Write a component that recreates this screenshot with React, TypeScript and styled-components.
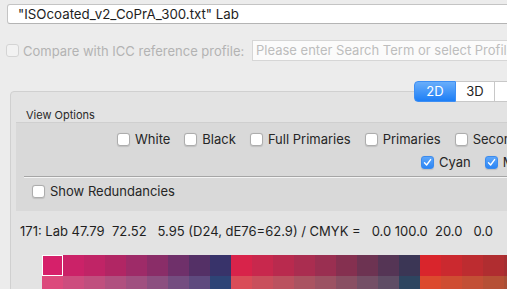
import React from "react";
import styled, { createGlobalStyle } from "styled-components";

const GlobalStyle = createGlobalStyle`
  html, body {
    margin: 0;
    padding: 0;
    background: #ececec;
    overflow: hidden;
  }
  body {
    font-family: Inter, "Liberation Sans", Arial, sans-serif;
    font-size: 13px;
    color: #262626;
  }
`;

// swatch colours, one array per group, two rows each
const groups: string[][][] = [
  [
    ["#d6206a", "#cb2268", "#c02466", "#b12664", "#9e2b68", "#8a2d68", "#6f306a", "#543066", "#38336a"],
    ["#dc4a7c", "#cd4d7e", "#c04f7e", "#b0507f", "#a05080", "#8c4f80", "#744d80", "#5e4a7e", "#2e4476"],
  ],
  [
    ["#d8234a", "#c8284d", "#b92a4e", "#aa2d50", "#9a2f51", "#853050", "#6d3352", "#553555", "#3b3655"],
    ["#d94d58", "#c94f5c", "#bb515f", "#aa5361", "#9c5263", "#894f63", "#744f66", "#5f4d65", "#2e4560"],
  ],
  [
    ["#d9252c", "#cb292f", "#bd2c30", "#b02d30", "#a42e31", "#972f33", "#823036", "#6b303a", "#55323f"],
    ["#dc4a2e", "#cf4d32", "#c34f35", "#b65035", "#a94f36", "#9b4e3a", "#874c40", "#714a47", "#5a484e"],
  ],
];

const Window = styled.div`
  width: 507px;
  height: 289px;
  overflow: hidden;
`;

const PathField = styled.div`
  box-sizing: border-box;
  width: 620px;
  height: 20px;
  margin: 4px 0 0 7px;
  padding-left: 10px;
  line-height: 18px;
  font-size: 13.3px;
  background: #fff;
  border: 1px solid #c4c4c4;
  border-bottom-color: #b4b4b4;
  border-radius: 3px;
  color: #1e1e1e;
  white-space: nowrap;
`;

const CompareRow = styled.div`
  display: flex;
  align-items: center;
  margin-top: 16px;
  padding-left: 6px;
  height: 21px;
`;

const CompareLabel = styled.span`
  flex: 0 0 229px;
  margin-left: 4px;
  color: #b3b3b3;
  white-space: nowrap;
`;

const SearchField = styled.div`
  box-sizing: border-box;
  flex: 0 0 400px;
  height: 21px;
  padding-left: 3px;
  line-height: 19px;
  background: #fbfbfb;
  border: 1px solid #d6d6d6;
  color: #bdbdbd;
  white-space: nowrap;
`;

const Tabs = styled.div`
  position: relative;
  z-index: 1;
  display: flex;
  margin: 20px 0 -11px 414px;
  height: 21px;
  width: 200px;
`;

const Segment = styled.div<{ $active?: boolean; $w: number }>`
  box-sizing: border-box;
  width: ${(p) => p.$w}px;
  height: 21px;
  line-height: 19px;
  text-align: center;
  font-size: 13px;
  color: ${(p) => (p.$active ? "#fff" : "#222")};
  background: ${(p) => (p.$active ? "linear-gradient(#69aefa, #1d7ef6)" : "#fff")};
  border: 1px solid ${(p) => (p.$active ? "#3d8ef3" : "#c8c8c8")};
  border-left-width: ${(p) => (p.$active ? 1 : 0)}px;
  &:first-child {
    border-radius: 4px 0 0 4px;
  }
`;

const TabBox = styled.div`
  box-sizing: border-box;
  width: 700px;
  margin-left: 10px;
  padding: 16px 0 0 5px;
  height: 260px;
  background: #e3e3e3;
  border: 1px solid #d0d0d0;
  border-radius: 4px;
`;

const GroupTitle = styled.div`
  margin-left: 10px;
  height: 14px;
  line-height: 15px;
  font-size: 11px;
  color: #2a2a2a;
`;

const OptionsBox = styled.div`
  padding: 7px 0 10px 0;
  background: #d9d9d9;
  box-shadow: inset 0 1px 0 #cfcfcf;
`;

const OptionRow = styled.div<{ $indent: number; $gap?: number }>`
  display: flex;
  align-items: center;
  gap: 14px;
  height: 20px;
  padding-left: ${(p) => p.$indent}px;
  margin-top: ${(p) => p.$gap ?? 0}px;
`;

const Option = styled.label`
  display: flex;
  align-items: center;
  gap: 5px;
  white-space: nowrap;
`;

const Box = styled.span<{ $checked?: boolean; $disabled?: boolean }>`
  box-sizing: border-box;
  display: inline-flex;
  align-items: center;
  justify-content: center;
  flex: 0 0 13px;
  width: 13px;
  height: 13px;
  border-radius: 3px;
  background: ${(p) => (p.$checked ? "linear-gradient(#5da6fa, #2c86f5)" : p.$disabled ? "#f2f2f2" : "#fff")};
  border: 1px solid ${(p) => (p.$checked ? "#3b8bee" : p.$disabled ? "#d4d4d4" : "#adadad")};
  box-shadow: ${(p) => (p.$disabled ? "none" : "0 0.5px 1px rgba(0,0,0,0.12)")};
`;

const Separator = styled.div`
  margin: 4px 0 2px 8px;
  height: 1px;
  background: #a6a6a6;
  box-shadow: 0 1px 0 #f4f4f4;
`;

const Readout = styled.div`
  margin: 12px 0 0 4px;
  line-height: 16px;
  white-space: pre;
  color: #1f1f1f;
`;

const Swatches = styled.div`
  display: flex;
  margin: 16px 0 0 26px;
`;

const SwatchGroup = styled.div`
  display: grid;
  grid-template-columns: repeat(9, 21px);
  grid-auto-rows: 21px;
`;

const Swatch = styled.div<{ $selected?: boolean }>`
  box-shadow: ${(p) => (p.$selected ? "inset 0 0 0 1px #fff" : "none")};
`;

const Checkbox: React.FC<{ checked?: boolean; disabled?: boolean }> = ({ checked, disabled }) => (
  <Box $checked={checked} $disabled={disabled}>
    {checked && (
      <svg width="9" height="9" viewBox="0 0 9 9">
        <path d="M1.5 4.8 L3.6 7 L7.6 1.6" fill="none" stroke="#fff" strokeWidth="1.4" strokeLinecap="round" strokeLinejoin="round" />
      </svg>
    )}
  </Box>
);

const Opt: React.FC<{ label: string; checked?: boolean }> = ({ label, checked }) => (
  <Option>
    <Checkbox checked={checked} />
    {label}
  </Option>
);

export default function App() {
  return (
    <Window>
      <GlobalStyle />
      <PathField>"ISOcoated_v2_CoPrA_300.txt" Lab</PathField>
      <CompareRow>
        <Checkbox disabled />
        <CompareLabel>Compare with ICC reference profile:</CompareLabel>
        <SearchField>Please enter Search Term or select Profile</SearchField>
      </CompareRow>
      <Tabs>
        <Segment $active $w={42}>2D</Segment>
        <Segment $w={39}>3D</Segment>
        <Segment $w={60}>{"\u00a0"}</Segment>
      </Tabs>
      <TabBox>
        <GroupTitle>View Options</GroupTitle>
        <OptionsBox>
          <OptionRow $indent={101}>
            <Opt label="White" />
            <Opt label="Black" />
            <Opt label="Full Primaries" />
            <Opt label="Primaries" />
            <Opt label="Secondaries" />
          </OptionRow>
          <OptionRow $indent={405} $gap={3}>
            <Opt label="Cyan" checked />
            <Opt label="Magenta" checked />
          </OptionRow>
          <Separator />
          <OptionRow $indent={16} $gap={4}>
            <Opt label="Show Redundancies" />
          </OptionRow>
        </OptionsBox>
        <Readout>{"171: Lab 47.79  72.52   5.95 (D24, dE76=62.9) / CMYK =   0.0 100.0  20.0   0.0"}</Readout>
        <Swatches>
          {groups.map((rows, g) => (
            <SwatchGroup key={g}>
              {rows.map((row, r) =>
                row.map((c, i) => (
                  <Swatch key={`${r}-${i}`} $selected={g === 0 && r === 0 && i === 0} style={{ background: c }} />
                ))
              )}
            </SwatchGroup>
          ))}
        </Swatches>
      </TabBox>
    </Window>
  );
}
